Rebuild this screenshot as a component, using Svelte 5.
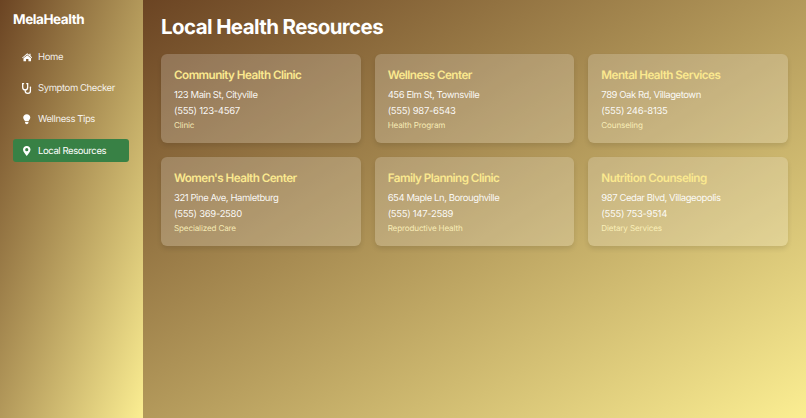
<script>
  const nav = [
    { label: "Home", icon: "home" },
    { label: "Symptom Checker", icon: "steth" },
    { label: "Wellness Tips", icon: "bulb" },
    { label: "Local Resources", icon: "pin", active: true }
  ];

  const resources = [
    { name: "Community Health Clinic", address: "123 Main St, Cityville", phone: "(555) 123-4567", type: "Clinic" },
    { name: "Wellness Center", address: "456 Elm St, Townsville", phone: "(555) 987-6543", type: "Health Program" },
    { name: "Mental Health Services", address: "789 Oak Rd, Villagetown", phone: "(555) 246-8135", type: "Counseling" },
    { name: "Women's Health Center", address: "321 Pine Ave, Hamletburg", phone: "(555) 369-2580", type: "Specialized Care" },
    { name: "Family Planning Clinic", address: "654 Maple Ln, Boroughville", phone: "(555) 147-2589", type: "Reproductive Health" },
    { name: "Nutrition Counseling", address: "987 Cedar Blvd, Villageopolis", phone: "(555) 753-9514", type: "Dietary Services" }
  ];
</script>

<div class="layout">
  <aside class="sidebar">
    <div class="logo">MelaHealth</div>
    <nav>
      {#each nav as item}
        <div class="nav-item" class:active={item.active}>
          <span class="icon">
            {#if item.icon === "home"}
              <svg width="10.5" height="8.5" viewBox="0 0 22 18" fill="currentColor">
                <path d="M11 0.5 L15.5 4.3 V1.5 H18 V6.4 L22 9.8 L20.8 11.2 L11 3 L1.2 11.2 L0 9.8 Z" />
                <path d="M11 4.6 L19 11.2 V17.5 H13.5 V12.5 H8.5 V17.5 H3 V11.2 Z" />
              </svg>
            {:else if item.icon === "steth"}
              <svg width="10" height="11" viewBox="0 0 22 24" fill="none" stroke="currentColor" stroke-width="2.8" stroke-linecap="round">
                <path d="M3.5 1.5 H1.5 V9 C1.5 13 4 15 7 15 C10 15 12.5 13 12.5 9 V1.5 H10.5" />
                <path d="M7 15 V17.5 C7 20.5 9.5 22.5 13 22.5 C16.5 22.5 18.5 20.5 18.5 17.5 V12" />
                <circle cx="18.5" cy="9.5" r="1.8" fill="currentColor" stroke="none" />
              </svg>
            {:else if item.icon === "bulb"}
              <svg width="7.5" height="10.5" viewBox="0 0 18 24" fill="currentColor">
                <path d="M9 0 C4 0 0.5 3.6 0.5 8 C0.5 12 3.6 13.6 4.6 17 H13.4 C14.4 13.6 17.5 12 17.5 8 C17.5 3.6 14 0 9 0 Z" />
                <path d="M5 18.5 H13 V20.5 C13 22.5 11 24 9 24 C7 24 5 22.5 5 20.5 Z" />
              </svg>
            {:else}
              <svg width="7.5" height="10" viewBox="0 0 18 24">
                <path fill="currentColor" fill-rule="evenodd" d="M9 0 C4 0 0 3.8 0 8.6 C0 13.5 5.5 20 9 24 C12.5 20 18 13.5 18 8.6 C18 3.8 14 0 9 0 Z M9 5 A3.8 3.8 0 1 1 9 12.6 A3.8 3.8 0 1 1 9 5 Z" />
              </svg>
            {/if}
          </span>
          <span class="label">{item.label}</span>
        </div>
      {/each}
    </nav>
  </aside>

  <main>
    <h1>Local Health Resources</h1>
    <div class="grid">
      {#each resources as r}
        <div class="card">
          <h3>{r.name}</h3>
          <p class="address">{r.address}</p>
          <p class="phone">{r.phone}</p>
          <span class="type">{r.type}</span>
        </div>
      {/each}
    </div>
  </main>
</div>

<style>
  :global(body) {
    margin: 0;
    font-family: Inter, "Noto Sans", sans-serif;
    text-rendering: geometricPrecision;
  }

  .layout {
    display: flex;
    width: 806px;
    height: 418px;
    overflow: hidden;
    color: #fff;
  }

  .sidebar {
    width: 143px;
    flex-shrink: 0;
    box-sizing: border-box;
    padding: 11.5px 14px 11px 13px;
    background: linear-gradient(to bottom right, #6b4423, #fbee92);
  }

  .logo {
    font-size: 13.5px;
    font-weight: 700;
    line-height: 16px;
    letter-spacing: -0.42px;
    margin-bottom: 18.2px;
  }

  nav {
    display: flex;
    flex-direction: column;
    gap: 7.9px;
  }

  .nav-item {
    display: flex;
    align-items: center;
    height: 23.2px;
    border-radius: 3px;
    font-size: 9.5px;
    color: rgba(255, 255, 255, 0.9);
  }

  .label {
    letter-spacing: -0.4px;
    padding-top: 1px;
  }

  .nav-item.active {
    background: #388145;
    color: #fff;
  }

  .icon {
    width: 25px;
    display: flex;
    justify-content: center;
    padding-left: 3px;
    box-sizing: border-box;
    color: #fff;
  }

  main {
    flex: 1;
    box-sizing: border-box;
    padding: 12.5px 18px;
    background: linear-gradient(to bottom right, #6b4423, #fbee92);
  }

  h1 {
    margin: 0 0 14.5px;
    font-size: 20.5px;
    line-height: 27px;
    font-weight: 700;
    letter-spacing: -0.6px;
  }

  .grid {
    display: grid;
    grid-template-columns: repeat(3, 1fr);
    gap: 14px;
  }

  .card {
    height: 89px;
    box-sizing: border-box;
    padding: 13px;
    border-radius: 6px;
    background: rgba(255, 255, 255, 0.2);
    box-shadow: 0 3px 5px rgba(0, 0, 0, 0.1);
  }

  h3 {
    margin: 0 0 4px;
    font-size: 11.7px;
    line-height: 17px;
    font-weight: 600;
    letter-spacing: -0.55px;
    color: #fbe98f;
  }

  p {
    margin: 0;
    font-size: 9.5px;
    line-height: 15.7px;
    color: rgba(255, 255, 255, 0.95);
  }

  .address {
    letter-spacing: -0.43px;
  }

  .phone {
    letter-spacing: -0.3px;
  }

  .type {
    display: block;
    font-size: 8.1px;
    line-height: 12.5px;
    letter-spacing: -0.15px;
    color: rgba(255, 245, 190, 0.9);
  }
</style>
